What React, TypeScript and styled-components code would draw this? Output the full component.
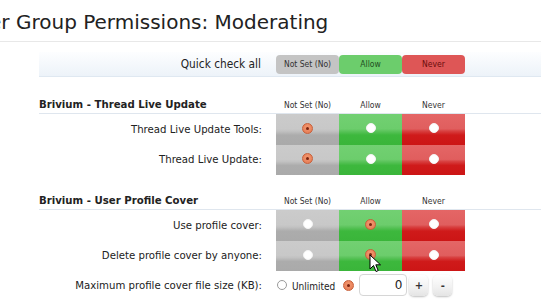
import React from 'react';
import styled, { createGlobalStyle, css } from 'styled-components';

const Global = createGlobalStyle`
  html, body { margin: 0; padding: 0; background: #fff; }
  body {
    font-family: "DejaVu Sans Condensed", "DejaVu Sans", sans-serif;
    color: #222;
    overflow: hidden;
  }
`;

type Tone = 'unset' | 'allow' | 'never';

const Page = styled.div`
  width: 541px;
  height: 300px;
  overflow: hidden;
  position: relative;
  background: #fff;
`;

const TitleBar = styled.div`
  height: 42px;
  box-sizing: border-box;
  border-bottom: 1px solid #e8e8e8;
  overflow: hidden;
`;

const Title = styled.h1`
  margin: 0 0 0 -36px;
  padding-top: 10px;
  font-family: "DejaVu Sans", sans-serif;
  font-weight: normal;
  font-size: 20px;
  line-height: 24px;
  white-space: nowrap;
  color: #222;
`;

const Form = styled.div`
  padding-left: 39px;
`;

const gridCols = css`
  display: grid;
  grid-template-columns: 237px 63px 63px 63px 1fr;
  align-items: center;
`;

const QuickBand = styled.div`
  ${gridCols};
  margin-top: 10px;
  height: 24px;
  background: linear-gradient(to bottom, #fdfeff 0%, #f3f7fb 60%, #edf3f9 100%);
  border-bottom: 1px solid #dfe8f1;
`;

const QuickLabel = styled.div`
  text-align: right;
  padding-right: 15px;
  font-size: 11.8px;
  color: #222;
  white-space: nowrap;
`;

const quickColors: Record<Tone, { bg: string; fg: string }> = {
  unset: { bg: '#c4c4c4', fg: '#333' },
  allow: { bg: '#6ccd6c', fg: '#1f4d1f' },
  never: { bg: '#de5656', fg: '#6a0d0d' },
};

const QuickButton = styled.div<{ $tone: Tone }>`
  height: 19px;
  border-radius: 4px;
  background: ${(p) => quickColors[p.$tone].bg};
  color: ${(p) => quickColors[p.$tone].fg};
  font-size: 8.5px;
  display: flex;
  align-items: center;
  justify-content: center;
  white-space: nowrap;
`;

const SectionHeader = styled.div<{ $gap: number }>`
  ${gridCols};
  margin-top: ${(p) => p.$gap}px;
  height: 18px;
  box-sizing: border-box;
  border-bottom: 1px solid #dfe6ee;
`;

const SectionTitle = styled.div`
  font-weight: bold;
  font-size: 11.3px;
  color: #222;
  white-space: nowrap;
`;

const ColHead = styled.div`
  font-size: 8.5px;
  color: #333;
  text-align: center;
  white-space: nowrap;
`;

const Row = styled.div`
  ${gridCols};
  height: 30.5px;
`;

const Label = styled.div`
  text-align: right;
  padding-right: 14px;
  font-size: 11.3px;
  color: #222;
  white-space: nowrap;
`;

const cellGrad: Record<Tone, string> = {
  unset: 'linear-gradient(to bottom, #cbcbcb 0%, #c8c8c8 48%, #c2c2c2 55%, #acacac 68%, #aaaaaa 100%)',
  allow: 'linear-gradient(to bottom, #72d072 0%, #6ccd6c 48%, #5cc45c 55%, #3db83d 68%, #3ab53a 100%)',
  never: 'linear-gradient(to bottom, #e46666 0%, #e05e5e 48%, #d84040 55%, #cf1a1a 68%, #cc1515 100%)',
};

const Cell = styled.div<{ $tone: Tone }>`
  height: 100%;
  background: ${(p) => cellGrad[p.$tone]};
  display: flex;
  align-items: center;
  justify-content: center;
  padding-bottom: 2px;
  box-sizing: border-box;
`;

const Radio = styled.span<{ $on?: boolean; $outline?: boolean }>`
  display: inline-block;
  box-sizing: border-box;
  width: ${(p) => (p.$on ? 11 : 10)}px;
  height: ${(p) => (p.$on ? 11 : 10)}px;
  border-radius: 50%;
  position: relative;
  flex: none;
  ${(p) =>
    p.$on
      ? css`
          background: radial-gradient(circle at 50% 40%, #f49a72 0%, #e8815a 70%, #d86a44 100%);
          border: 1px solid #c8603a;
          &::after {
            content: '';
            position: absolute;
            left: 50%;
            top: 50%;
            width: 3px;
            height: 3px;
            margin: -1.5px 0 0 -1.5px;
            border-radius: 50%;
            background: #7a2410;
          }
        `
      : css`
          background: #fff;
          border: 1px solid ${p.$outline ? '#9a9a9a' : '#f4f4f4'};
        `}
`;

const LastRow = styled.div`
  ${gridCols};
  margin-top: 1px;
  height: 26px;
`;

const Controls = styled.div`
  grid-column: 2 / 6;
  display: flex;
  align-items: center;
  padding-left: 1px;
`;

const OptionText = styled.span`
  font-size: 10px;
  color: #222;
  margin-left: 5px;
  margin-right: 8px;
  padding-top: 3px;
`;

const NumberBox = styled.div`
  margin-left: 5px;
  width: 48px;
  height: 22px;
  box-sizing: border-box;
  border: 1px solid #d6d6d6;
  border-radius: 4px;
  background: #fff;
  font-family: "DejaVu Sans", sans-serif;
  font-size: 12px;
  color: #222;
  display: flex;
  align-items: center;
  justify-content: flex-end;
  padding-right: 4px;
`;

const StepButton = styled.div<{ $gap: number }>`
  margin-left: ${(p) => p.$gap}px;
  width: 19px;
  height: 21px;
  box-sizing: border-box;
  border-radius: 5px;
  background: linear-gradient(to bottom, #ffffff 0%, #f1f1f1 60%, #e4e4e4 100%);
  box-shadow: 0 1px 2px rgba(0, 0, 0, 0.25);
  font-family: "DejaVu Sans", sans-serif;
  font-size: 10px;
  font-weight: bold;
  color: #333;
  display: flex;
  align-items: center;
  justify-content: center;
`;

const Cursor = styled.svg`
  position: absolute;
  left: 369px;
  top: 254px;
  pointer-events: none;
`;

const tones: Tone[] = ['unset', 'allow', 'never'];

type Perm = { label: string; value: Tone };

const Section: React.FC<{ title: string; gap: number; perms: Perm[] }> = ({ title, gap, perms }) => (
  <>
    <SectionHeader $gap={gap}>
      <SectionTitle>{title}</SectionTitle>
      <ColHead>Not Set (No)</ColHead>
      <ColHead>Allow</ColHead>
      <ColHead>Never</ColHead>
    </SectionHeader>
    {perms.map((p) => (
      <Row key={p.label}>
        <Label>{p.label}</Label>
        {tones.map((t) => (
          <Cell key={t} $tone={t}>
            <Radio $on={p.value === t} />
          </Cell>
        ))}
      </Row>
    ))}
  </>
);

export default function App() {
  return (
    <Page>
      <Global />
      <TitleBar>
        <Title>User Group Permissions: Moderating</Title>
      </TitleBar>
      <Form>
        <QuickBand>
          <QuickLabel>Quick check all</QuickLabel>
          <QuickButton $tone="unset">Not Set (No)</QuickButton>
          <QuickButton $tone="allow">Allow</QuickButton>
          <QuickButton $tone="never">Never</QuickButton>
        </QuickBand>
        <Section
          title="Brivium - Thread Live Update"
          gap={19}
          perms={[
            { label: 'Thread Live Update Tools:', value: 'unset' },
            { label: 'Thread Live Update:', value: 'unset' },
          ]}
        />
        <Section
          title="Brivium - User Profile Cover"
          gap={17}
          perms={[
            { label: 'Use profile cover:', value: 'allow' },
            { label: 'Delete profile cover by anyone:', value: 'allow' },
          ]}
        />
        <LastRow>
          <Label>Maximum profile cover file size (KB):</Label>
          <Controls>
            <Radio $outline />
            <OptionText>Unlimited</OptionText>
            <Radio $on />
            <NumberBox>0</NumberBox>
            <StepButton $gap={2}>+</StepButton>
            <StepButton $gap={5}>-</StepButton>
          </Controls>
        </LastRow>
      </Form>
      <Cursor width="13" height="19" viewBox="0 0 13 19">
        <path d="M1 1 L1 15 L4.5 11.5 L7 17.5 L9.2 16.6 L6.8 10.8 L11.5 10.8 Z" fill="#fff" stroke="#000" strokeWidth="1" strokeLinejoin="round" />
      </Cursor>
    </Page>
  );
}
